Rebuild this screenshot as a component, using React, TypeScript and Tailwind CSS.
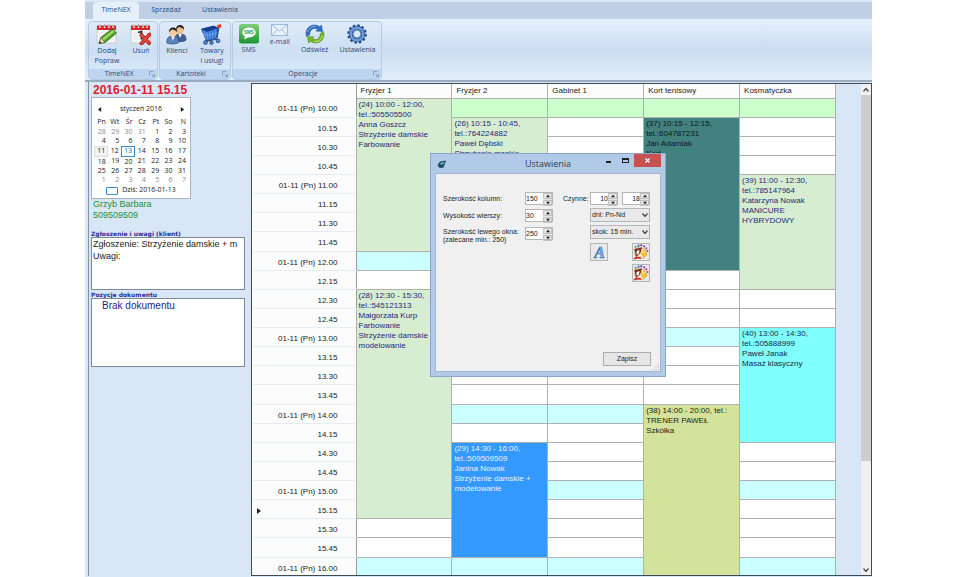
import { useState } from 'react';
import type { ReactNode } from 'react';
import { clsx } from 'clsx';

type Appointment = {
  start: number;
  span: number;
  lines: string[];
  style: string;
};

const columns = ['Fryzjer 1', 'Fryzjer 2', 'Gabinet 1', 'Kort tenisowy', 'Kosmatyczka'];

// One row is a quarter of an hour, row 0 is 10.00
const rows = Array.from({ length: 25 }, (_, i) => {
  const hour = 10 + Math.floor(i / 4);
  const minutes = (i % 4) * 15;
  return {
    fullHour: minutes === 0,
    label: minutes === 0 ? `01-11 (Pn) ${hour}.00` : `${hour}.${minutes}`,
  };
});

const appointments: Appointment[][] = [
  [
    {
      start: 0,
      span: 8,
      lines: ['(24) 10:00 - 12:00,', 'tel.:505505500', 'Anna Goszcz', 'Strzyżenie damskie', 'Farbowanie'],
      style: 'bg-[#d7edd1] text-[#1f2a78]',
    },
    {
      start: 10,
      span: 12,
      lines: ['(28) 12:30 - 15:30,', 'tel.:545121313', 'Małgorzata Kurp', 'Farbowanie', 'Strzyżenie damskie +', 'modelowanie'],
      style: 'bg-[#d7edd1] text-[#1f2a78]',
    },
  ],
  [
    {
      start: 1,
      span: 2,
      lines: ['(26) 10:15 - 10:45,', 'tel.:764224882', 'Paweł Dębski', 'Strzyżenie męskie'],
      style: 'bg-[#d7edd1] text-[#1f2a78]',
    },
    {
      start: 18,
      span: 6,
      lines: ['(29) 14:30 - 16:00,', 'tel.:509509509', 'Janina Nowak', 'Strzyżenie damskie +', 'modelowanie'],
      style: 'bg-[#3399ff] text-[#e6f2ff]',
    },
  ],
  [],
  [
    {
      start: 1,
      span: 8,
      lines: ['(37) 10:15 - 12:15,', 'tel.:604787231', 'Jan Adamiak', 'Kort'],
      style: 'bg-[#438080] text-[#061a1a]',
    },
    {
      start: 16,
      span: 9,
      lines: ['(38) 14:00 - 20:00, tel.:', 'TRENER PAWEŁ', 'Szkółka'],
      style: 'bg-[#d4e39b] text-[#1c1f10]',
    },
  ],
  [
    {
      start: 4,
      span: 6,
      lines: ['(39) 11:00 - 12:30,', 'tel.:785147964', 'Katarzyna Nowak', 'MANICURE', 'HYBRYDOWY'],
      style: 'bg-[#d7edd1] text-[#1f2a78]',
    },
    {
      start: 12,
      span: 6,
      lines: ['(40) 13:00 - 14:30,', 'tel.:505888999', 'Paweł Janak', 'Masaż klasyczny'],
      style: 'bg-[#80ffff] text-[#102a4a]',
    },
  ],
];

const weekDays = ['Pn', 'Wt', 'Śr', 'Cz', 'Pt', 'So', 'N'];
const weeks = [
  [28, 29, 30, 31, 1, 2, 3],
  [4, 5, 6, 7, 8, 9, 10],
  [11, 12, 13, 14, 15, 16, 17],
  [18, 19, 20, 21, 22, 23, 24],
  [25, 26, 27, 28, 29, 30, 31],
  [1, 2, 3, 4, 5, 6, 7],
];

/* ---------- Icons ---------- */

const CalendarSheet = () => (
  <>
    <rect x="1" y="2" width="19" height="17" fill="#f6f6f6" stroke="#b9b9b9" strokeWidth=".6" />
    <rect x="1" y="1.5" width="19" height="4.5" fill="#d7262e" />
    <path d="M4 0v4M8.500 0v4M13 0v4M17 0v4" stroke="#fff" strokeWidth="1.300" />
    <path d="M4 0v3M8.500 0v3M13 0v3M17 0v3" stroke="#777" strokeWidth=".6" />
    <path d="M3 9h15M3 12h15M3 15h15" stroke="#d5d8dc" strokeWidth=".7" />
  </>
);

const EditIcon = () => (
  <svg viewBox="0 0 21 21" className="h-[21px] w-[21px]">
    <CalendarSheet />
    <path d="M3 19.500l2-6L16 5l4.500 4L9 18.500z" fill="#5aa72d" stroke="#2c6315" strokeWidth=".9" />
    <path d="M7 15.500L17.500 7" stroke="#a5e36e" strokeWidth="2" />
    <path d="M3 19.500l2-6L9 18.500z" fill="#f0d7a1" stroke="#444" strokeWidth=".5" />
    <path d="M3 19.500l.8-2.200 1.600 1.500z" fill="#222" />
  </svg>
);

const DeleteIcon = () => (
  <svg viewBox="0 0 21 21" className="h-[21px] w-[21px]">
    <CalendarSheet />
    <path d="M8 8.500l3.500-1v8" fill="none" stroke="#333" strokeWidth="1.800" />
    <path d="M11.500 11l7.500 8M19.500 10.500l-8 9" stroke="#8d1512" strokeWidth="3.800" strokeLinecap="round" />
    <path d="M11.500 11l7.500 8M19.500 10.500l-8 9" stroke="#e2433a" strokeWidth="2.600" strokeLinecap="round" />
  </svg>
);

const ClientsIcon = () => (
  <svg viewBox="0 0 21 21" className="h-[21px] w-[21px]">
    <path d="M8 17c0-5 1-7 6-7s6 2 6 6c-2 2-6 2-12 1z" fill="#3f5f93" stroke="#1d335c" strokeWidth=".6" />
    <path d="M12.500 10l1.500 4 1.800-4z" fill="#fff" />
    <circle cx="14" cy="6" r="3.800" fill="#edbd8c" />
    <path d="M10 6c-.5-7 9-6.500 8 0-1-3-4-2-5-3.500C12.500 4 11 4 10 6z" fill="#27211d" />
    <path d="M.8 19c0-5 1.500-7 6-7s6 2 6 6.500c-3 2-8 2-12 .5z" fill="#5b82bd" stroke="#24406f" strokeWidth=".6" />
    <path d="M5.300 12l1.500 5 1.800-5z" fill="#fff" />
    <circle cx="7" cy="8.500" r="3.900" fill="#f5cc9d" />
    <path d="M3 8.500c-.5-7 9-6.500 8 0-1-3-3.500-2-4.800-3.500C5.500 6.500 4 6.500 3 8.500z" fill="#1c1917" />
  </svg>
);

const CartIcon = () => (
  <svg viewBox="0 0 21 21" className="h-[21px] w-[21px]">
    <path d="M.5 5l12-3 5 2-1.500 10-10.500 3z" fill="#2c6fd2" stroke="#173f86" strokeWidth=".7" />
    <path d="M.5 5L6 7.700l11.500-3.700-5-2z" fill="#123d8c" />
    <path d="M6 7.700l1 8M8.700 7l.6 8M11.400 6.200l.4 8M14.200 5.400v8M3 6.500l2.200 9M2 10l4.500 1.500 10-3" stroke="#8dc0ff" strokeWidth=".6" fill="none" />
    <path d="M16 13.500l2.300-11.500h2" fill="none" stroke="#35466a" strokeWidth="1" />
    <path d="M16 1l4-.8v3.300l-3 .5z" fill="#d8342c" />
    <path d="M4.500 17.500l12-2.500" stroke="#35466a" strokeWidth="1.200" />
    <circle cx="4.500" cy="18.500" r="1.900" fill="#4b8be0" stroke="#183c78" strokeWidth=".8" />
    <circle cx="10.500" cy="18.800" r="1.700" fill="#4b8be0" stroke="#183c78" strokeWidth=".8" />
    <circle cx="17" cy="16.800" r="1.900" fill="#4b8be0" stroke="#183c78" strokeWidth=".8" />
  </svg>
);

const SmsIcon = () => (
  <svg viewBox="0 0 20 20" className="h-5 w-5">
    <defs>
      <linearGradient id="sms" x2="0" y2="1">
        <stop stopColor="#7ed07b" />
        <stop offset="1" stopColor="#1f9431" />
      </linearGradient>
    </defs>
    <rect width="20" height="19.500" rx="2.500" fill="url(#sms)" />
    <ellipse cx="10" cy="8.500" rx="6.600" ry="5" fill="#fff" />
    <path d="M6 11.500l-.8 4 4.500-2.500z" fill="#fff" />
    <text x="10" y="10.300" textAnchor="middle" fontSize="4.500" fontWeight="bold" fill="#2c9c3b" className="font-['Liberation_Sans',sans-serif]">
      SMS
    </text>
  </svg>
);

const MailIcon = () => (
  <svg viewBox="0 0 17 12" className="h-3 w-[17px]">
    <rect x=".5" y=".5" width="16" height="11" fill="#e9f2fc" stroke="#9db9dc" />
    <path d="M1 1l7.500 6L16 1M1 11l5.500-5.500M16 11l-5.500-5.500" fill="none" stroke="#8fadd6" strokeWidth=".8" />
  </svg>
);

const RefreshIcon = () => (
  <svg viewBox="0 0 20 20" className="h-5 w-5">
    <path d="M1.500 12.500C-.5 6 4 .5 10 1c2 .1 3.500.8 4.700 1.700L16.500 1l1 6.500-6.500-.4 1.700-1.900C8.500 3 4.500 5.500 4.800 10.500z" fill="#2f6fc4" stroke="#1c4a90" strokeWidth=".5" />
    <path d="M2.500 8C3.500 4.500 6.500 2.200 10.500 2.300" fill="none" stroke="#84b5f0" strokeWidth="1" />
    <path d="M18.500 7.500c2 6.500-2.500 12-8.500 11.500-2-.1-3.500-.8-4.700-1.700L3.500 19l-1-6.500 6.500.4-1.700 1.900c4.200 2.200 8.200-.3 7.900-5.300z" fill="#76b82a" stroke="#42791a" strokeWidth=".5" />
    <path d="M17.500 12c-1 3.500-4 5.800-8 5.700" fill="none" stroke="#c3ea7b" strokeWidth="1" />
  </svg>
);

const GearIcon = () => (
  <svg viewBox="0 0 20 20" className="h-5 w-5">
    <circle cx="10" cy="10" r="8.500" fill="none" stroke="#28508f" strokeWidth="2.600" strokeDasharray="2.550 1.900" />
    <circle cx="10" cy="10" r="6.300" fill="none" stroke="#28508f" strokeWidth="3.800" />
    <circle cx="10" cy="10" r="6.300" fill="none" stroke="#6d9fdc" strokeWidth="2.200" />
    <circle cx="10" cy="10" r="3.900" fill="#dce9f8" stroke="#28508f" strokeWidth=".7" />
  </svg>
);

const LauncherIcon = () => (
  <svg viewBox="0 0 6 6" className="h-[6px] w-[6px]">
    <path d="M.5 4.500v-4h4M2.500 2.500l3 3M5.500 3v2.500H3" fill="none" stroke="#7b94b8" strokeWidth=".8" />
  </svg>
);

const FontIcon = () => (
  <svg viewBox="0 0 15 15" className="h-[15px] w-[15px]">
    <text x="7.500" y="13" textAnchor="middle" fontSize="16" fontStyle="italic" fontWeight="bold" fill="#7db6ea" stroke="#2e6fb5" strokeWidth=".6" className="font-['Liberation_Serif',serif]">
      A
    </text>
  </svg>
);

const PaletteIcon = () => (
  <svg viewBox="0 0 16 16" className="h-4 w-4">
    <path d="M1.500 5L6 3l6.500 2.500L14 11l-4 3.500H5L2 11z" fill="#fbf3d0" stroke="#a8935a" strokeWidth=".6" />
    <path d="M1.500 5L9 3.500 7.500 9 3 13z" fill="#7d2b1d" />
    <path d="M3.500 7l3-1L6 9.500l-2.300 1.300z" fill="#fff" />
    <path d="M7.500 8.500L11 5l3 5.500-4 3.500z" fill="#f0bd33" />
    <path d="M9.500 9l2-1.800" stroke="#fff3b8" strokeWidth="1.200" />
    <path d="M1 14.800c3-2 4-1 7-1" fill="none" stroke="#d4202a" strokeWidth="1.600" />
    <circle cx="5.500" cy="1.700" r="1.100" fill="#4b5fc9" />
    <circle cx="8.300" cy="1.300" r="1.100" fill="#6a3bb5" />
    <circle cx="11.200" cy="2.300" r="1.100" fill="#8a3bb5" />
    <circle cx="13.300" cy="4.300" r="1.100" fill="#c43ba8" />
    <circle cx="14.500" cy="7" r="1.100" fill="#d83b6a" />
    <circle cx="2.500" cy="2.800" r="1" fill="#3fa05a" />
  </svg>
);

const AppIcon = () => (
  <svg viewBox="0 0 10 8" className="h-2 w-[10px]">
    <path d="M.5 5L3 1.500l6-1L7 6.500l-4 1z" fill="#1d4a5e" />
    <path d="M2.500 4.500L4 2.500l3.500-.6-1 2.600z" fill="#5db3c9" />
    <path d="M1 6.500l3 1 3-.6" fill="none" stroke="#152b38" strokeWidth=".8" />
  </svg>
);

const Triangle = ({ d, className }: { d: string; className: string }) => (
  <svg viewBox="0 0 6 6" className={className}>
    <path d={d} fill="currentColor" />
  </svg>
);

const UP = 'M0 5l3-4 3 4z';
const DOWN = 'M0 1l3 4 3-4z';
const LEFT = 'M5 0v6L1 3z';
const RIGHT = 'M1 0v6l4-3z';

const Chevron = ({ up = false, className = '' }: { up?: boolean; className?: string }) => (
  <svg viewBox="0 0 6 4" className={clsx('h-1 w-[6px] text-[#444]', className)}>
    <path d={up ? 'M.5 3.500l2.500-3 2.500 3' : 'M.5 .5l2.500 3 2.500-3'} fill="none" stroke="currentColor" strokeWidth="1.200" />
  </svg>
);

/* ---------- Ribbon ---------- */

const RibbonButton = ({ icon, label }: { icon: ReactNode; label: string }) => (
  <button className="flex flex-col items-center gap-px whitespace-pre-line text-center leading-[10px] text-[#274a80]">
    {icon}
    {label}
  </button>
);

const RibbonGroup = ({ title, className, children }: { title: string; className: string; children: ReactNode }) => (
  <section
    className={clsx(
      'flex h-[59px] shrink-0 flex-col rounded-sm border border-[#b4cae6] bg-linear-to-b from-[#dfebf8] via-[#cddff2] to-[#dcecfb]',
      className,
    )}
  >
    <div className="flex flex-1 items-start justify-around pt-[2px]">{children}</div>
    <div className="flex h-[10px] items-center bg-[#bed5f0] pr-[2px] text-[#274a80]">
      <h2 className="flex-1 text-center leading-[10px]">{title}</h2>
      <button aria-label={`${title} – więcej`}>
        <LauncherIcon />
      </button>
    </div>
  </section>
);

const Ribbon = () => (
  <header className="border-b-2 border-[#9aabc2] bg-[#bfcfe6] font-['Open_Sans',sans-serif] text-[7px]">
    <nav className="flex h-[19px] items-end border-t-2 border-[#dbe7f6] pl-2 text-[#274a80]">
      <button className="h-[17px] w-[46px] rounded-t-sm bg-[#e6f0fb]">TimeNEX</button>
      <button className="h-[17px] w-[54px]">Sprzedaż</button>
      <button className="h-[17px] w-[54px]">Ustawienia</button>
    </nav>
    <div className="flex gap-px bg-linear-to-b from-[#e6f1fd] via-[#ccdcf0] to-[#e3effc] px-[3px] pt-[2px]">
      <RibbonGroup title="TimeNEX" className="w-[70px]">
        <RibbonButton icon={<EditIcon />} label={'Dodaj\nPopraw'} />
        <RibbonButton icon={<DeleteIcon />} label="Usuń" />
      </RibbonGroup>
      <RibbonGroup title="Kartoteki" className="w-[72px]">
        <RibbonButton icon={<ClientsIcon />} label="Klienci" />
        <RibbonButton icon={<CartIcon />} label={'Towary\ni usługi'} />
      </RibbonGroup>
      <RibbonGroup title="Operacje" className="w-[150px]">
        <RibbonButton icon={<SmsIcon />} label="SMS" />
        <RibbonButton icon={<MailIcon />} label="e-mail" />
        <RibbonButton icon={<RefreshIcon />} label="Odśwież" />
        <RibbonButton icon={<GearIcon />} label="Ustawienia" />
      </RibbonGroup>
    </div>
  </header>
);

/* ---------- Left panel ---------- */

const MonthCalendar = () => (
  <div className="w-[100px] border border-[#a9b4c2] bg-white px-[2px] pb-[2px] pt-[6px] font-['Open_Sans',sans-serif] text-[7px] text-[#222]">
    <div className="flex h-[10px] items-center justify-between px-[3px]">
      <button aria-label="Poprzedni miesiąc">
        <Triangle d={LEFT} className="h-[5px] w-[5px]" />
      </button>
      <span>styczeń 2016</span>
      <button aria-label="Następny miesiąc">
        <Triangle d={RIGHT} className="h-[5px] w-[5px]" />
      </button>
    </div>
    <table className="mt-[3px] w-full table-fixed border-collapse">
      <thead>
        <tr className="h-[10px]">
          {weekDays.map((day) => (
            <th key={day} className="p-0 pr-[2px] text-right font-normal leading-[8px]">
              {day}
            </th>
          ))}
        </tr>
      </thead>
      <tbody className="h-[58px]">
        {weeks.map((week, w) => (
          <tr key={w}>
            {week.map((day, d) => {
              const outside = (w === 0 && day > 7) || w === 5;
              return (
                <td
                  key={d}
                  className={clsx(
                    'p-0 pr-[2px] text-right leading-[8px]',
                    outside && 'text-[#8a8a8a]',
                    w === 2 && day === 11 && 'border border-[#dcdcdc] bg-[#f3f3f3]',
                    w === 2 && day === 13 && 'border border-[#3b87cc] text-[#2672b8]',
                  )}
                >
                  {day}
                </td>
              );
            })}
          </tr>
        ))}
      </tbody>
    </table>
    <div className="flex h-[11px] items-center justify-center gap-1">
      <span className="h-2 w-3 rounded-[1px] border border-[#3b87cc]" />
      Dziś: 2016-01-13
    </div>
  </div>
);

const SidePanel = () => (
  <aside className="flex w-[163px] shrink-0 flex-col border-l border-[#7f95a8] pl-[2px] pr-[6px] pt-px font-['Liberation_Sans',Arial,sans-serif]">
    <h1 className="pl-[2px] text-[12px] font-bold leading-[14px] text-[#d81f34]">2016-01-11 15.15</h1>
    <MonthCalendar />
    <p className="pl-[2px] text-[9px] leading-[11px] text-[#23913c]">
      Grzyb Barbara
      <br />
      509509509
    </p>
    <label htmlFor="notes" className="mt-[10px] text-[6px] font-bold leading-[6px] text-[#2b2f96] font-['DejaVu_Sans',sans-serif]">
      Zgłoszenie i uwagi (klient)
    </label>
    <textarea
      id="notes"
      readOnly
      wrap="off"
      defaultValue={'Zgłoszenie: Strzyżenie damskie + m\nUwagi:'}
      className="h-[53px] w-full resize-none overflow-hidden border border-[#7d8a96] bg-white px-px text-[9px] leading-[12px] text-[#222]"
    />
    <h2 className="mt-[2px] text-[6px] font-bold leading-[6px] text-[#2b2f96] font-['DejaVu_Sans',sans-serif]">Pozycje dokumentu</h2>
    <div className="h-[69px] border border-[#7d8a96] bg-white pl-[10px] pt-px text-[10px] leading-[12px] text-[#1f1f8c]">
      Brak dokumentu
    </div>
  </aside>
);

/* ---------- Schedule ---------- */

const ScheduleCell = ({ column, row }: { column: number; row: number }) => {
  const booked = appointments[column].find((a) => row >= a.start && row < a.start + a.span);
  if (booked && booked.start !== row) return null;

  if (booked) {
    return (
      <td rowSpan={booked.span} className={clsx('border border-[#b0b0b0] p-0 align-top', booked.style)}>
        <div className="h-9 whitespace-nowrap pl-[2px] pt-px leading-[10px]">
          {booked.lines.map((line) => (
            <div key={line}>{line}</div>
          ))}
        </div>
      </td>
    );
  }

  return (
    <td
      className={clsx(
        'border border-[#b0b0b0] p-0',
        row === 0 ? 'bg-[#ccffcc]' : rows[row].fullHour ? 'bg-[#ccffff]' : 'bg-white',
      )}
    />
  );
};

const Schedule = () => (
  <main className="mt-px flex min-w-0 flex-1 overflow-hidden border border-[#3f4a56] font-['Liberation_Sans',Arial,sans-serif] text-[8px] text-[#222]">
    <div className="min-w-0 flex-1 overflow-hidden pr-[25px]">
      <table className="h-[493px] w-full table-fixed border-collapse bg-white">
        <thead>
          <tr className="h-[14px] bg-[#fcfcfc]">
            <th className="w-[104px] border-r border-[#999] p-0" />
            {columns.map((name) => (
              <th key={name} className="border-x border-b border-[#b0b0b0] p-0 pl-1 pt-px text-left font-normal leading-[12px]">
                {name}
              </th>
            ))}
          </tr>
        </thead>
        <tbody>
          {rows.map((row, r) => (
            <tr key={r} className="h-[19px]">
              <th className="border-b border-r border-b-[#e6ecf4] border-r-[#999] bg-[#fcfcfc] p-0 pl-1 pr-[18px] pt-1 font-normal leading-[10px]">
                <div className="flex items-center justify-between">
                  <span>{row.label === '15.15' && <Triangle d={RIGHT} className="h-[6px] w-[6px]" />}</span>
                  {row.label}
                </div>
              </th>
              {columns.map((name, c) => (
                <ScheduleCell key={name} column={c} row={r} />
              ))}
            </tr>
          ))}
        </tbody>
      </table>
    </div>
    <div className="flex w-[10px] flex-col bg-[#f0f0f0]">
      <button aria-label="W górę" className="flex h-[11px] items-center justify-center">
        <Chevron up />
      </button>
      <div className="flex-1">
        <div className="h-[78%] bg-[#cdcdcd]" />
      </div>
      <button aria-label="W dół" className="flex h-[11px] items-center justify-center">
        <Chevron />
      </button>
    </div>
  </main>
);

/* ---------- Settings window ---------- */

const Spinner = ({ id, label, initial, right = false }: { id: string; label?: string; initial: number; right?: boolean }) => {
  const [value, setValue] = useState(initial);
  return (
    <div className="flex h-[13px] w-7 border border-[#b5b5b5] bg-white">
      <input
        id={id}
        aria-label={label}
        value={value}
        onChange={(e) => setValue(Number(e.target.value) || 0)}
        className={clsx('w-0 min-w-0 flex-1 bg-white', right && 'text-right')}
      />
      <div className="flex w-[9px] flex-col gap-px bg-[#e4e4e4]">
        <button aria-label="Zwiększ" onClick={() => setValue(value + 1)} className="flex flex-1 items-center justify-center border border-[#c4c4c4]">
          <Triangle d={UP} className="h-1 w-1 shrink-0" />
        </button>
        <button aria-label="Zmniejsz" onClick={() => setValue(value - 1)} className="flex flex-1 items-center justify-center border border-[#c4c4c4]">
          <Triangle d={DOWN} className="h-1 w-1 shrink-0" />
        </button>
      </div>
    </div>
  );
};

const Select = ({ label, option }: { label: string; option: string }) => (
  <div className="relative">
    <select aria-label={label} className="h-[14px] w-full appearance-none border border-[#b5b5b5] bg-[#e9e9e9] pl-px">
      <option>{option}</option>
    </select>
    <Chevron className="pointer-events-none absolute right-[2px] top-[5px]" />
  </div>
);

const IconButton = ({ label, children }: { label: string; children: ReactNode }) => (
  <button aria-label={label} className="flex h-[18px] w-[18px] items-center justify-center border border-[#b5b5b5] bg-[#e9e9e9]">
    {children}
  </button>
);

const SettingsWindow = () => (
  <div
    role="dialog"
    aria-label="Ustawienia"
    className="absolute left-[345px] top-[153px] flex h-56 w-[236px] flex-col border border-[#8ba6c9] bg-[#b0cae8] px-1 pb-1"
  >
    <div className="flex h-[19px] shrink-0 items-start font-['Open_Sans',sans-serif]">
      <div className="flex w-[60px] pl-[2px] pt-[6px]">
        <AppIcon />
      </div>
      <h2 className="flex-1 pt-[3px] text-center text-[9px] leading-[14px] text-[#33404f]">Ustawienia</h2>
      <div className="flex w-[60px] justify-end">
        <button aria-label="Minimalizuj" className="flex h-[13px] w-4 items-center justify-center">
          <span className="mt-[3px] h-[2px] w-[5px] bg-[#222]" />
        </button>
        <button aria-label="Maksymalizuj" className="flex h-[13px] w-[18px] items-center justify-center">
          <span className="h-[5px] w-[7px] border border-t-2 border-[#222]" />
        </button>
        <button aria-label="Zamknij" className="flex h-[13px] w-[28px] items-center justify-center bg-[#c75050] text-white">
          <svg viewBox="0 0 5 5" className="h-[5px] w-[5px]">
            <path d="M.5 .5l4 4M4.500 .5l-4 4" stroke="currentColor" strokeWidth="1.200" />
          </svg>
        </button>
      </div>
    </div>

    <form
      onSubmit={(e) => e.preventDefault()}
      className="flex flex-1 flex-col border border-[#a0b7d3] bg-[#f0f0f0] pl-[7px] pt-[18px] font-['Liberation_Sans',Arial,sans-serif] text-[7px] leading-[8px] text-[#222]"
    >
      <div className="flex items-start justify-between pr-[10px]">
        <div className="grid grid-cols-[82px_28px] items-center gap-y-1">
          <label htmlFor="columnWidth">Szerokość kolumn:</label>
          <Spinner id="columnWidth" initial={150} />
          <label htmlFor="rowHeight">Wysokość wierszy:</label>
          <Spinner id="rowHeight" initial={30} />
          <label htmlFor="leftWidth" className="self-start whitespace-nowrap pt-[2px]">
            Szerokość lewego okna:
            <br />
            (zalecane min.: 250)
          </label>
          <div className="self-start pt-px">
            <Spinner id="leftWidth" initial={250} />
          </div>
        </div>
        <div className="grid grid-cols-[27px_60px] gap-y-[3px]">
          <label htmlFor="openFrom" className="pt-[3px]">
            Czynne:
          </label>
          <div className="flex justify-between">
            <Spinner id="openFrom" initial={10} right />
            <Spinner id="openTo" label="Czynne do" initial={18} right />
          </div>
          <div className="col-start-2">
            <Select label="Dni" option="dni: Pn-Nd" />
          </div>
          <div className="col-start-2">
            <Select label="Skok" option="skok: 15 min." />
          </div>
          <div className="col-start-2 flex justify-between pt-px">
            <IconButton label="Czcionka">
              <FontIcon />
            </IconButton>
            <IconButton label="Kolory">
              <PaletteIcon />
            </IconButton>
          </div>
          <div className="col-start-2 flex justify-end">
            <IconButton label="Kolory dodatkowe">
              <PaletteIcon />
            </IconButton>
          </div>
        </div>
      </div>
      <div className="mt-auto flex justify-end pb-[5px] pr-[9px]">
        <button className="h-[14px] w-12 border border-[#adadad] bg-[#e6e6e6]">Zapisz</button>
      </div>
    </form>
    <svg viewBox="0 0 7 7" className="absolute bottom-[5px] right-[5px] h-[7px] w-[7px]">
      <path d="M5 0h1v1H5zM5 2.500h1v1H5zM5 5h1v1H5zM2.500 2.500h1v1h-1zM2.500 5h1v1h-1zM0 5h1v1H0z" fill="#b4b4b4" />
    </svg>
  </div>
);

const App = () => (
  <div className="h-screen bg-white">
    <div className="relative mx-auto flex h-full max-w-[787px] flex-col bg-[#d8e6f6]">
      <Ribbon />
      <div className="flex min-h-0 flex-1 bg-[#d8e6f6] pb-px pl-[3px]">
        <SidePanel />
        <Schedule />
      </div>
      <SettingsWindow />
    </div>
  </div>
);

export default App;
